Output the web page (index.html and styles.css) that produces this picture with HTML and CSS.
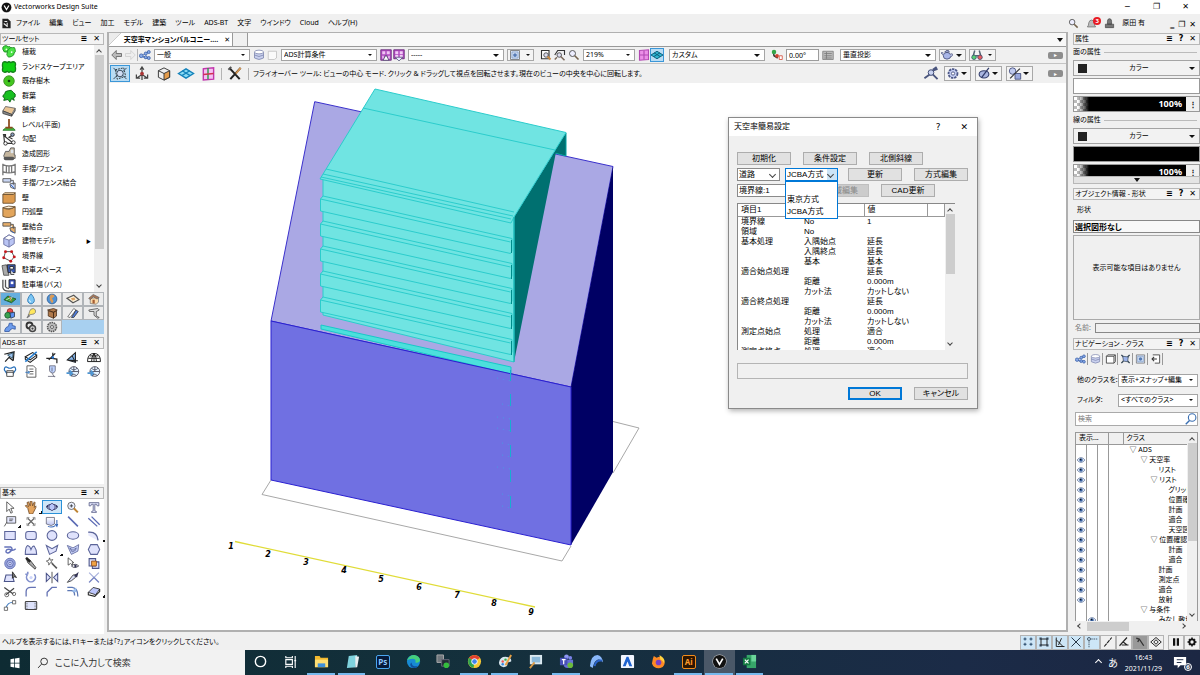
FILE: index.html
```html
<!DOCTYPE html>
<html lang="ja">
<head>
<meta charset="utf-8">
<title>Vectorworks Design Suite</title>
<link rel="stylesheet" href="styles.css">
</head>
<body>
<svg class="sprite" aria-hidden="true">
<defs>
<linearGradient id="gPurple" x1="0" y1="0" x2="0" y2="1"><stop offset="0" stop-color="#fff"/><stop offset="1" stop-color="#b9c2f2"/></linearGradient>
<!-- landscape tools -->
<symbol id="plants" viewBox="0 0 16 16"><path d="M1 5q-1-3 2-4 2-1 4 1 2-1 3 1l-1 4q-2 2-4 1-3 1-4-3z" fill="#3fdc3c" stroke="#1c8a22"/><path d="M6 9q-1-3 2-4 1-3 4-2 3-1 3 2 1 3-1 4 0 3-3 4-4 2-5-1-1-1 0-3z" fill="#4be246" stroke="#1c8a22"/><circle cx="11" cy="8" r="1" fill="#fff"/><circle cx="5" cy="5" r="1" fill="#e8ffe0"/></symbol>
<symbol id="area" viewBox="0 0 16 16"><path d="M1 3q2-2 5 0 2-2 4 0 3-2 5 0 1 2 0 4 1 3 0 6-2 2-5 0-2 2-4 0-3 2-5 0-1-2 0-4-1-3 0-6z" fill="#0fcf12" stroke="#14801a" stroke-width="1.5"/></symbol>
<symbol id="tree" viewBox="0 0 16 16"><circle cx="8" cy="8" r="6" fill="#43c61f" stroke="#3a8a26"/><circle cx="8" cy="8" r="1.500" fill="#123f10"/></symbol>
<symbol id="bush" viewBox="0 0 16 16"><path d="M1 9q0-3 2-3 0-4 4-4 4-2 6 2 3 1 2 5l-2 1 1 3-3-2-2 4-2-3-5 1 1-3z" fill="#18c020" stroke="#0a5f12"/></symbol>
<symbol id="pave" viewBox="0 0 16 16"><path d="M1 9l3-5 11 2-4 7z" fill="#e9c595" stroke="#666"/><path d="M1 9v3l10 3v-2zM11 13v2l4-6V6" fill="#8b8b8b" stroke="#444"/></symbol>
<symbol id="level" viewBox="0 0 16 16"><path d="M1 14q3-4 7-3 5-1 7 3z" fill="#49b83e" stroke="#25782a"/><path d="M8 1v10M4 11h8" stroke="#8c4a1e" stroke-width="2"/></symbol>
<symbol id="slope" viewBox="0 0 16 16"><path d="M1 3h3v3M2 4l11 9H3zM13 3l-5 3 4 2" fill="none" stroke="#333" stroke-width="1.300"/><circle cx="12" cy="3" r="2" fill="#8aa0c0" stroke="#222"/><circle cx="4" cy="13" r="2" fill="#fff" stroke="#222"/><circle cx="13" cy="12" r="2" fill="#fff" stroke="#222"/></symbol>
<symbol id="dozer" viewBox="0 0 16 16"><path d="M2 10l2-5h4l2-4h4v8h1v4H3z" fill="#c5b69e" stroke="#555"/><rect x="2" y="11" width="12" height="4" rx="2" fill="#555"/><path d="M10 3h3v4h-3z" fill="#dfe6ee"/></symbol>
<symbol id="fence" viewBox="0 0 16 16"><path d="M1 2v13M15 2v13M1 3q7 3 14 0M1 11q7 3 14 0M5 4v8M8 4v9M11 4v8" stroke="#777" stroke-width="1.500" fill="none"/></symbol>
<symbol id="fencej" viewBox="0 0 16 16"><path d="M1 3h9v4H1zM10 5h3v5M9 9l6-1v7l-5-2z" fill="#c9d6f4" stroke="#555"/><path d="M10 10l4 4" stroke="#2d63c8"/></symbol>
<symbol id="wall" viewBox="0 0 16 16"><path d="M1 4h12l2-2v10l-2 2H1z" fill="#dc9a4e" stroke="#6b5030"/><path d="M1 4l2-2h12l-2 2z" fill="#f7d7a8" stroke="#6b5030"/></symbol>
<symbol id="cwall" viewBox="0 0 16 16"><path d="M1 3q7 4 14-1v10q-7 4-14 1z" fill="#e2a55c" stroke="#6b5030"/><path d="M1 3q6-3 14-1-7 4-14 1z" fill="#fff0d8" stroke="#6b5030"/></symbol>
<symbol id="wallj" viewBox="0 0 16 16"><path d="M1 3h9v4H1zM10 5h3v5M9 9l6-1v7l-5-2z" fill="#e7ae69" stroke="#555"/><path d="M10 12l4 3" stroke="#2d63c8"/></symbol>
<symbol id="bmodel" viewBox="0 0 16 16"><path d="M2 5l6-4 6 3v7l-6 4-6-3z" fill="#b9c4f3" stroke="#6a70a0"/><path d="M2 5l6 2 6-3-6-3z" fill="#fff" stroke="#6a70a0"/><path d="M8 7v8" stroke="#6a70a0"/></symbol>
<symbol id="bound" viewBox="0 0 16 16"><path d="M4 3l7 0 3 6-4 5-8-4z" fill="none" stroke="#444"/><g fill="#c7181e"><circle cx="4" cy="3" r="1.700"/><circle cx="11" cy="3" r="1.700"/><circle cx="14" cy="9" r="1.700"/><circle cx="10" cy="14" r="1.700"/><circle cx="2" cy="10" r="1.700"/></g></symbol>
<symbol id="park" viewBox="0 0 16 16"><path d="M0 3l5-1 3 12H2z" fill="#aaa" stroke="#555"/><path d="M6 2h9v9H7z" fill="#3d5cb8" stroke="#222"/><path d="M9 4h4v3H9zM10 8v5h4" fill="#fff" stroke="#222"/></symbol>
<symbol id="bus" viewBox="0 0 16 16"><path d="M1 2v9q1 4 6 4h7M4 2v8q1 2 4 2" fill="none" stroke="#555" stroke-width="1.500"/><path d="M8 2h7v9H8z" fill="#3953b8" stroke="#222"/><path d="M10 4h3v3h-3z" fill="#fff"/></symbol>
<!-- tool set tabs -->
<symbol id="t1" viewBox="0 0 16 16"><path d="M0 9l5-5 11 4-6 5z" fill="#3b9e36" stroke="#17451d"/><path d="M3 9l6-3M8 10l3-5" stroke="#fff"/><path d="M7 4l3 7" stroke="#ea5a2b"/></symbol>
<symbol id="t2" viewBox="0 0 16 16"><path d="M8 1q6 7 4 11-4 5-8 0-2-4 4-11z" fill="#7cc6f4" stroke="#1e6aa8"/><path d="M6 9q0 3 2 3" stroke="#fff" fill="none"/></symbol>
<symbol id="t3" viewBox="0 0 16 16"><circle cx="8" cy="8" r="6.500" fill="#4f93d8" stroke="#25558f"/><path d="M7 2q5 0 4 3l-3 2 2 4-2 3-3-5V4z" fill="#d99b59"/></symbol>
<symbol id="t4" viewBox="0 0 16 16"><path d="M0 7l9-4 7 6-8 4z" fill="#fbf0d8" stroke="#555" stroke-width="1.500"/><path d="M5 7l5-1 1 3-4 1z" fill="#e0a565"/></symbol>
<symbol id="t5" viewBox="0 0 16 16"><path d="M3 7v7l8 1 3-3V6z" fill="#fbd9a8" stroke="#777"/><path d="M1 7l6-5 8 4-3 2-5-3-4 4z" fill="#a87555" stroke="#666"/><path d="M6 9h3v5H6z" fill="#a55d33"/></symbol>
<symbol id="t6" viewBox="0 0 16 16"><path d="M4 7q0-5 4-5t4 5z" fill="#e84c4c" stroke="#822"/><circle cx="5" cy="11" r="4" fill="#3aa24f" stroke="#164f2b"/><path d="M8 8l6-1v6l-5 2z" fill="#5b8ff0" stroke="#234"/></symbol>
<symbol id="t7" viewBox="0 0 16 16"><path d="M4 11q2-3 2-5 1-4 5-4 4 1 3 5-1 3-6 3z" fill="#ffe75e" stroke="#777"/><path d="M2 14l3-4 2 2-4 3z" fill="#777"/></symbol>
<symbol id="t8" viewBox="0 0 16 16"><path d="M2 4l8-2 5 2-5 3zM3 5l7 2v8l-7-3zM10 7l4-2v7l-4 3z" fill="#b07a4c" stroke="#462b17"/></symbol>
<symbol id="t9" viewBox="0 0 16 16"><path d="M1 13L9 2l3 2-8 10z" fill="#fff" stroke="#555"/><path d="M6 14l6-10 3 2-6 8z" fill="#4d7adb" stroke="#333"/></symbol>
<symbol id="t10" viewBox="0 0 16 16"><path d="M1 4l12-2 2 2-4 2v6l4 2-2 1-5-4V6L2 6z" fill="#ddd" stroke="#444"/></symbol>
<symbol id="t11" viewBox="0 0 16 16"><path d="M1 12q1-4 5-5l1-4h4v3l4 1v4l-4-1-3 2-1 2H1z" fill="#6d9cec" stroke="#294f9b"/></symbol>
<symbol id="t12" viewBox="0 0 16 16"><circle cx="6" cy="6" r="4" fill="none" stroke="#333" stroke-width="2.500"/><circle cx="10" cy="10" r="4" fill="#ddd" stroke="#444" stroke-width="2"/><circle cx="10" cy="10" r="1.500" fill="#444"/></symbol>
<symbol id="gear" viewBox="0 0 16 16"><circle cx="8" cy="8" r="6" fill="#bbb" stroke="#555" stroke-width="2" stroke-dasharray="2 1"/><circle cx="8" cy="8" r="2" fill="#eee" stroke="#444"/></symbol>
<!-- ADS-BT -->
<symbol id="a1" viewBox="0 0 16 16"><path d="M1 4l12-3-1 11M2 13L13 1M7 8l5 4" fill="none" stroke="#222" stroke-width="1.500"/><path d="M5 5l7-3-1 7z" fill="#9bc2ef" stroke="#245"/></symbol>
<symbol id="a2" viewBox="0 0 16 16"><path d="M1 7l9-5 5 3-8 6zM1 7v3l6 4 8-6V5" fill="none" stroke="#222" stroke-width="1.300"/><path d="M1 13L15 1" stroke="#267ed0" stroke-width="2"/></symbol>
<symbol id="a3" viewBox="0 0 16 16"><path d="M1 9h7l6 1v5M4 11l8-8M9 2v5" fill="none" stroke="#222" stroke-width="1.500"/><circle cx="9" cy="8" r="1.500" fill="#2476d8"/></symbol>
<symbol id="a4" viewBox="0 0 16 16"><path d="M1 11l10-9v12zM1 11l13 1M7 6l4 8" fill="#86b6ec" stroke="#222" stroke-width="1.300"/></symbol>
<symbol id="a5" viewBox="0 0 16 16"><path d="M0 13q0-10 8-10t8 10zM5 13q0-6 3-10 3 4 3 10M8 3v10M1 9h14M3 6h10" fill="none" stroke="#222" stroke-width="1.200"/></symbol>
<symbol id="a6" viewBox="0 0 16 16"><path d="M5 3Q1 1 1 6l4 6M11 3q4-2 4 3l-4 6M5 3q3 2 6 0" fill="none" stroke="#246db8" stroke-width="1.500"/><path d="M4 7h8v7H4z" fill="#fff" stroke="#333"/><path d="M4 9h8" stroke="#333"/></symbol>
<symbol id="a7" viewBox="0 0 16 16"><path d="M3 1h8l3 3v11H3z" fill="#fff" stroke="#444"/><path d="M6 5h5M6 8h5M6 11h5" stroke="#444"/><path d="M1 9h5l-2-2M6 9l-2 2" stroke="#226fc2" fill="none"/></symbol>
<symbol id="a8" viewBox="0 0 16 16"><path d="M5 1h7v6q-1 3-3 3-4-1-4-3z" fill="#bed3ff" stroke="#667"/><path d="M3 14h9M8 10l3 5M8 3v5" stroke="#667"/></symbol>
<symbol id="a9" viewBox="0 0 16 16"><circle cx="9" cy="8" r="6" fill="#e4f2ff" stroke="#445"/><path d="M3 8h12M9 2v6M5 4q4 4 8 0M6 14q1-5 6-1" stroke="#445" fill="none"/><path d="M0 10h7M4 7l3 3-3 3" stroke="#4e95d2" stroke-width="2" fill="none"/></symbol>
<!-- basic tools -->
<symbol id="cursor" viewBox="0 0 16 16"><path d="M4 1v12l3-3 2 5 2-1-2-5h4z" fill="#fff" stroke="#444"/></symbol>
<symbol id="hand" viewBox="0 0 16 16"><path d="M4 9L1 6l1-1 3 2-2-5 2-1 2 5V0h2l1 6 2-5 1 1-1 6 2-2v2l-3 6-1 2H6z" fill="#e5a55e" stroke="#704a26"/></symbol>
<symbol id="orbit" viewBox="0 0 16 16"><ellipse cx="8" cy="8" rx="7" ry="3.500" fill="none" stroke="#336" stroke-width="1.300"/><path d="M8 3l4 3v4l-4 3-4-3V6z" fill="#b9c6f8" stroke="#336"/><path d="M0 7l3-2v4zM16 7l-3-2v4z" fill="#336"/></symbol>
<symbol id="zoomin" viewBox="0 0 16 16"><circle cx="6" cy="6" r="4.500" fill="#e9efff" stroke="#555"/><path d="M4 6h4M6 4v4" stroke="#333"/><path d="M9 9l5 5" stroke="#be8433" stroke-width="2.500"/></symbol>
<symbol id="text" viewBox="0 0 16 16"><path d="M2 2h12v4h-2l-1-2H9v8l2 1v1H5v-1l2-1V4H5L4 6H2z" fill="#dfe3fa" stroke="#5b6087"/></symbol>
<symbol id="note" viewBox="0 0 16 16"><path d="M4 2h11v8H4zM4 9l-3 5" fill="#e6e9ff" stroke="#444"/><path d="M7 5h5M7 7h4" stroke="#444"/></symbol>
<symbol id="locus" viewBox="0 0 16 16"><path d="M4 4l8 8M12 4l-8 8" stroke="#666" stroke-width="1.500"/><path d="M3 6V3h3M10 3h3v3M3 10v3h3M10 13h3v-3" fill="none" stroke="#888"/></symbol>
<symbol id="push" viewBox="0 0 16 16"><path d="M1 3h10v8l-4 2-6-2z" fill="url(#gPurple)" stroke="#667"/><path d="M3 14q5 2 9-1M14 6v7M12 11l2 3 1-3" stroke="#3566b8" fill="none" stroke-width="1.300"/></symbol>
<symbol id="line" viewBox="0 0 16 16"><path d="M2 2l12 12" stroke="#5b6ab4" stroke-width="2"/></symbol>
<symbol id="dline" viewBox="0 0 16 16"><path d="M1 4l11 10M5 2l10 10" stroke="#5b6ab4" stroke-width="1.600"/></symbol>
<symbol id="rect" viewBox="0 0 16 16"><path d="M1.500 3h13v10h-13z" fill="#dfe2fc" stroke="#5b6499" stroke-width="1.300"/></symbol>
<symbol id="rrect" viewBox="0 0 16 16"><rect x="1.500" y="3" width="13" height="10" rx="3" fill="#dfe2fc" stroke="#5b6499" stroke-width="1.300"/></symbol>
<symbol id="circ" viewBox="0 0 16 16"><circle cx="8" cy="8" r="6" fill="#dfe2fc" stroke="#5b6499" stroke-width="1.300"/></symbol>
<symbol id="oval" viewBox="0 0 16 16"><ellipse cx="8" cy="8" rx="7" ry="4.500" fill="#dfe2fc" stroke="#5b6499" stroke-width="1.300"/></symbol>
<symbol id="arc" viewBox="0 0 16 16"><path d="M1 4q11-1 12 10L1 8" fill="#e8eafd"/><path d="M1 4q11-1 12 10" fill="none" stroke="#5b6499" stroke-width="1.600"/></symbol>
<symbol id="free" viewBox="0 0 16 16"><path d="M1 5h8q3 2 0 5-4 4-6 1 0-4 5-3 4 2 7-1" fill="none" stroke="#6573ba" stroke-width="1.800"/></symbol>
<symbol id="spline" viewBox="0 0 16 16"><path d="M1 14q0-10 3-11 3 1 4 5 2-5 4-4 3 4 3 10z" fill="#dfe2fc" stroke="#5b6499" stroke-width="1.300"/></symbol>
<symbol id="poly" viewBox="0 0 16 16"><path d="M1 3l7 4 7-4-2 7-8 4z" fill="#dfe2fc" stroke="#5b6499" stroke-width="1.300"/></symbol>
<symbol id="dpoly" viewBox="0 0 16 16"><path d="M1 3l7 3 7-4-1 8-8 4zM4 6l4 3 4-3-1 3-4 2z" fill="#c7d1f9" stroke="#5b6499"/></symbol>
<symbol id="hex" viewBox="0 0 16 16"><path d="M4 2h8l3 6-3 6H4L1 8z" fill="#dfe2fc" stroke="#5b6499" stroke-width="1.300"/></symbol>
<symbol id="spiral" viewBox="0 0 16 16"><circle cx="8" cy="8" r="6.500" fill="#9aa5dd" stroke="#5b6ab0"/><circle cx="8" cy="8" r="4" fill="#b3bdec" stroke="#5b67ad"/><circle cx="8" cy="8" r="1.500" fill="#eef" stroke="#5b67ad"/></symbol>
<symbol id="dropper" viewBox="0 0 16 16"><path d="M2 1l5 3 7 9-1 2-9-8z" fill="#aaa" stroke="#333"/><path d="M2 1l5 5" stroke="#222" stroke-width="3"/></symbol>
<symbol id="wand" viewBox="0 0 16 16"><path d="M5 1l1 3 3-1-2 3 2 2-3-1-2 3V7L1 5l3-1z" fill="#fff" stroke="#555"/><path d="M8 8l6 6" stroke="#555" stroke-width="2"/></symbol>
<symbol id="seye" viewBox="0 0 16 16"><path d="M2 1v9l3-2 3 3-1-4h2z" fill="#fff" stroke="#444"/><path d="M6 11q5-4 9 0-5 4-9 0z" fill="#fff" stroke="#334"/><circle cx="11" cy="11" r="1.500" fill="#335"/></symbol>
<symbol id="clip" viewBox="0 0 16 16"><path d="M2 2h8v9H2zM6 6h8v8H6z" fill="#dfe2fc" stroke="#4b5489" stroke-width="1.300"/><path d="M5 5h6v6H5z" fill="#f1a344" stroke="#904d1e"/></symbol>
<symbol id="reshape" viewBox="0 0 16 16"><path d="M3 5l8 0 2 8H1z" fill="#dfe2fc" stroke="#4b5489" stroke-width="1.300"/><path d="M11 1v8l2-2 3 1z" fill="#777" stroke="#222"/></symbol>
<symbol id="rot" viewBox="0 0 16 16"><path d="M4 4a5.500 5.500 0 1 0 8 0M4 4V1M4 4H1" fill="none" stroke="#8290cd" stroke-width="2"/><circle cx="8" cy="8" r="2" fill="#cfd6fa"/></symbol>
<symbol id="mirror" viewBox="0 0 16 16"><path d="M1 3l5 5-5 5zM15 3l-5 5 5 5z" fill="#dfe2fc" stroke="#4b5489" stroke-width="1.300"/><path d="M8 1v14" stroke="#333"/></symbol>
<symbol id="knife" viewBox="0 0 16 16"><path d="M1 14L8 5l5-1-2 4-5 4z" fill="#d9ddf6" stroke="#333"/><path d="M9 6l6-5-2 7z" fill="#335"/></symbol>
<symbol id="trim" viewBox="0 0 16 16"><path d="M2 2l12 12M14 2L2 14" stroke="#aab2dc" stroke-width="1.600"/><path d="M2 14l6-6 6 6" fill="none" stroke="#7d89c4" stroke-width="1.600"/></symbol>
<symbol id="sciss" viewBox="0 0 16 16"><path d="M1 3l11 8M3 12L13 4" stroke="#444" stroke-width="1.500"/><circle cx="4" cy="12" r="2.500" fill="none" stroke="#555"/><circle cx="13" cy="11" r="2" fill="none" stroke="#555"/></symbol>
<symbol id="fillet" viewBox="0 0 16 16"><path d="M2 14V8q0-5 6-5h6" fill="none" stroke="#6573b4" stroke-width="1.600"/></symbol>
<symbol id="chamf" viewBox="0 0 16 16"><path d="M2 14V9l6-6h6" fill="none" stroke="#6573b4" stroke-width="1.600"/></symbol>
<symbol id="offs" viewBox="0 0 16 16"><path d="M1 3h6q7 1 7 11M1 7h5q4 0 4 6" fill="none" stroke="#5c77b4" stroke-width="1.600"/><path d="M6 8l6-5v6z" fill="#9ec1ee"/></symbol>
<symbol id="plane" viewBox="0 0 16 16"><path d="M1 9l6-6 8 2-5 7z" fill="#bcc5fb" stroke="#222"/><path d="M1 9v3l8 2 6-6V5" fill="none" stroke="#222" stroke-width="1.300"/></symbol>
<symbol id="conn" viewBox="0 0 16 16"><path d="M3 11q2-7 9-7" fill="none" stroke="#4c84c4" stroke-width="1.500"/><path d="M1 10h4v4H1zM11 2h4v4h-4z" fill="#fff" stroke="#555"/></symbol>
<symbol id="frame" viewBox="0 0 16 16"><rect x="1" y="3" width="14" height="10" rx="1" fill="#dde2fb" stroke="#444" stroke-width="1.300"/><path d="M3 3v10M13 3v10" stroke="#444" stroke-dasharray="1 1"/></symbol>
<!-- tool bars -->
<symbol id="doc" viewBox="0 0 16 16"><path d="M2 1h8l4 4v10H2z" fill="#222"/><path d="M5 5h4M4 8l5 4M9 7v6" stroke="#eee" stroke-width="1.500"/></symbol>
<symbol id="vlogo" viewBox="0 0 16 16"><circle cx="8" cy="8" r="7.500" fill="#ccc"/><circle cx="8" cy="8" r="7" fill="#111"/><path d="M4.500 5L8 11l3.500-6" fill="none" stroke="#fff" stroke-width="1.800"/></symbol>
<symbol id="back" viewBox="0 0 16 16"><path d="M1 8l6-6v4h7v4H7v4z" fill="#bbb" stroke="#555"/></symbol>
<symbol id="fwd" viewBox="0 0 16 16"><path d="M15 8L9 2v4H2v4h7v4z" fill="#eee" stroke="#ccc"/></symbol>
<symbol id="class" viewBox="0 0 16 16"><path d="M3 9l10-5M3 9l10 3M3 9l6 4" stroke="#456bb0"/><g fill="#88a9e8" stroke="#3159a3"><circle cx="3" cy="9" r="2.500"/><circle cx="9" cy="6" r="2"/><circle cx="13" cy="4" r="2"/><circle cx="9" cy="11" r="2"/><circle cx="13" cy="12" r="2"/></g></symbol>
<symbol id="layer" viewBox="0 0 16 16"><path d="M2 4v8q6 4 12 0V4" fill="#c9d0ee" stroke="#7780aa"/><path d="M2 8q6 4 12 0" fill="none" stroke="#7780aa"/><ellipse cx="8" cy="4" rx="6" ry="2.500" fill="#fff" stroke="#7780aa"/></symbol>
<symbol id="sheet" viewBox="0 0 16 16"><path d="M3 3h11v9l-3 2H3z" fill="#fafafa" stroke="#bbb"/></symbol>
<symbol id="pview" viewBox="0 0 16 16"><path d="M1 1h14v14H1z" fill="#b04cc0" stroke="#5a1b6e"/><path d="M3 3h4v4H3zM9 3h4v4H9zM3 9h2v4H3zM11 9h2v4h-2z" fill="#f0c3f5"/><path d="M4 15l4-7 4 7z" fill="#fff" stroke="#446"/></symbol>
<symbol id="pview2" viewBox="0 0 16 16"><path d="M1 1h14v12H1z" fill="#b04cc0" stroke="#5a1b6e"/><path d="M3 3h4v4H3zM9 3h4v4H9zM3 8h4v3H3zM9 8h4v3H9z" fill="#f3cdf7"/><path d="M3 11h10l-5 5z" fill="#e9ecff" stroke="#557"/></symbol>
<symbol id="vsave" viewBox="0 0 16 16"><path d="M2 2h12v12H2z" fill="#dce6f7" stroke="#666"/><path d="M4 4h8v8H4z" fill="none" stroke="#7496c5"/><circle cx="8" cy="8" r="2.500" fill="#567bb5"/></symbol>
<symbol id="zpage" viewBox="0 0 16 16"><path d="M2 2h10v11H2z" fill="#fff" stroke="#333" stroke-width="1.500"/><circle cx="8" cy="8" r="3" fill="#dde" stroke="#333"/><path d="M10 10l4 4" stroke="#c78a45" stroke-width="2.500"/></symbol>
<symbol id="zobj" viewBox="0 0 16 16"><path d="M1 8l4-6h9v6" fill="none" stroke="#333" stroke-width="1.500"/><circle cx="7" cy="8" r="3" fill="#dde" stroke="#333"/><path d="M9 10l5 5M1 14l3-3" stroke="#7d6a5b" stroke-width="2"/></symbol>
<symbol id="mag" viewBox="0 0 16 16"><circle cx="6" cy="6" r="4" fill="#eef" stroke="#555" stroke-width="1.300"/><path d="M9 9l5 5" stroke="#73624d" stroke-width="2.200"/></symbol>
<symbol id="pgrid" viewBox="0 0 16 16"><path d="M2 2l12-1v13l-12 1z" fill="#ec8fe8" stroke="#b24ab3" stroke-width="1.500"/><path d="M8 2v12M2 8h12" stroke="#b24ab3" stroke-width="1.500"/></symbol>
<symbol id="tgrid" viewBox="0 0 16 16"><path d="M0 8l8-5 8 5-8 5z" fill="#2fb4cf" stroke="#0c5f7c" stroke-width="1.300"/><path d="M4 5l8 5M12 5l-8 5" stroke="#0c5f7c" stroke-width="1.300"/></symbol>
<symbol id="angle" viewBox="0 0 16 16"><path d="M3 3l1 6 5 3" fill="none" stroke="#333" stroke-width="2"/><circle cx="4" cy="4" r="3" fill="#34a546"/><circle cx="8" cy="9" r="2.500" fill="#d3402d"/><path d="M11 9h4v5h-4z" fill="#fff" stroke="#d3402d"/></symbol>
<symbol id="mlist" viewBox="0 0 16 16"><path d="M1 3h14v11H1z" fill="#bbb" stroke="#777"/><path d="M3 6h10M3 9h10M3 12h10M6 4v9" stroke="#777"/></symbol>
<symbol id="teapot" viewBox="0 0 16 16"><ellipse cx="8" cy="9" rx="5" ry="4.500" fill="#a9b6e8" stroke="#39416e"/><path d="M3 8L0 5l3 0M13 7q3-2 2 2l-3 2M5 4h6l-1-2H7z" fill="#cfd8fa" stroke="#39416e"/></symbol>
<symbol id="glass" viewBox="0 0 16 16"><path d="M3 9l2-7M13 9l-2-7M6 9h4" stroke="#567" stroke-width="2"/><circle cx="4" cy="11" r="3" fill="#56d477" stroke="#346"/><circle cx="12" cy="11" r="3" fill="#ee5c60" stroke="#346"/></symbol>
<symbol id="fly" viewBox="0 0 16 16"><path d="M3 4l9-2 2 9-9 3z" fill="none" stroke="#333" stroke-dasharray="2 1"/><circle cx="8" cy="8" r="3.500" fill="#cfdcf3" stroke="#345"/><path d="M1 2l4 4M15 2l-4 4M1 14l4-4M15 14l-4-4" stroke="#345"/></symbol>
<symbol id="axes" viewBox="0 0 16 16"><path d="M8 9V1M8 9l-6 4M8 9l6 4M6 4l2-3 2 3M2 9v4h4M14 9v4h-4M8 9v6" fill="none" stroke="#444" stroke-width="1.300"/><circle cx="8" cy="8" r="2" fill="#a33"/></symbol>
<symbol id="cube" viewBox="0 0 16 16"><path d="M2 5l6-3 6 3v7l-6 3-6-3z" fill="#eee" stroke="#333"/><path d="M8 8l6-3v7l-6 3z" fill="#e39b4b" stroke="#333"/><path d="M2 5l6 3" stroke="#333"/></symbol>
<symbol id="bgrid" viewBox="0 0 16 16"><path d="M0 8l8-5 8 5-8 5z" fill="#8bdcf6" stroke="#1482ba" stroke-width="1.500"/><path d="M4 5l8 5M12 5l-8 5" stroke="#1482ba" stroke-width="1.300"/></symbol>
<symbol id="rgrid" viewBox="0 0 16 16"><path d="M3 3l11-1v12l-11 1z" fill="#f6c0f3" stroke="#c236ad" stroke-width="1.500"/><path d="M8 2v12" stroke="#2b9a48" stroke-width="1.500"/><path d="M3 9l11-1" stroke="#d0314f" stroke-width="1.500"/></symbol>
<symbol id="wrench" viewBox="0 0 16 16"><path d="M2 2l11 12M3 14L14 2" stroke="#222" stroke-width="2.200"/><path d="M9 8l5-6" stroke="#d89a55" stroke-width="2"/><path d="M1 4l3-3" stroke="#555" stroke-width="2"/></symbol>
<symbol id="cross" viewBox="0 0 16 16"><path d="M1 13L8 8M7 6L15 3M8 7l7 7M10 4l4-3" stroke="#4a557e" stroke-width="2"/><circle cx="8" cy="7" r="3" fill="#c9d3f2" stroke="#3a456e"/></symbol>
<symbol id="pgear" viewBox="0 0 16 16"><circle cx="8" cy="8" r="5.500" fill="#c4cdf1" stroke="#4d5888" stroke-width="2.200" stroke-dasharray="3 1"/><circle cx="8" cy="8" r="2" fill="#fff" stroke="#3d4878"/></symbol>
<symbol id="orb" viewBox="0 0 16 16"><ellipse cx="8" cy="9" rx="6" ry="4.500" fill="#a9b6e0" stroke="#303b69" stroke-width="1.300"/><path d="M5 13L14 1" stroke="#303b69" stroke-width="1.500"/></symbol>
<symbol id="shp" viewBox="0 0 16 16"><circle cx="5" cy="5" r="4" fill="#c0caee" stroke="#3d4878"/><path d="M8 8h7v7H8z" fill="#9aa8dc" stroke="#3d4878"/><path d="M2 14L14 2" stroke="#333" stroke-width="1.500"/></symbol>
<symbol id="bell" viewBox="0 0 16 16"><path d="M2 13q2-2 2-6 1-4 4-4t4 4q0 4 2 6z" fill="#bbb" stroke="#666"/></symbol>
<symbol id="user" viewBox="0 0 16 16"><path d="M2 14V9h12v5zM5 9V5q0-4 3-4t3 4v4z" fill="#777" stroke="#444"/></symbol>
<symbol id="eye" viewBox="0 0 16 16"><path d="M0 8q8-10 16 0-8 10-16 0z" fill="#e4ecf8" stroke="#54698f" stroke-width="1.300"/><circle cx="8" cy="8" r="3.500" fill="#365f9f"/><circle cx="7" cy="7" r="1.500" fill="#111"/></symbol>
<symbol id="bsearch" viewBox="0 0 16 16"><circle cx="9.500" cy="6" r="5" fill="none" stroke="#3a6fb2" stroke-width="1.500"/><path d="M6 10l-5 5" stroke="#3a6fb2" stroke-width="1.800"/></symbol>
<symbol id="n3" viewBox="0 0 16 16"><path d="M2 4l2-2h11v10l-2 2H2zM2 4h11v10M13 4l2-2" fill="#fff" stroke="#444" stroke-width="1.300"/></symbol>
<symbol id="n4" viewBox="0 0 16 16"><path d="M2 2l3 3M14 2l-3 3M2 14l3-3M14 14l-3-3" stroke="#345" stroke-width="2"/><path d="M4 4l8 1-1 7-6-1z" fill="#9cb3ea" stroke="#345"/></symbol>
<symbol id="n6" viewBox="0 0 16 16"><path d="M4 2h10v12H7" fill="#fff" stroke="#444" stroke-width="1.300"/><path d="M10 8H3M6 5L3 8l3 3" fill="none" stroke="#333" stroke-width="1.500"/></symbol>
<!-- snapping -->
<symbol id="s1" viewBox="0 0 16 16"><path d="M2 4h4M4 2v4M10 4h4M12 2v4M2 11h4M4 9v4M10 11h4M12 9v4" stroke="#246" stroke-width="1.300"/></symbol>
<symbol id="s2" viewBox="0 0 16 16"><path d="M4 4h8v8H4z" fill="none" stroke="#222" stroke-width="1.300"/><path d="M2 2h3v3H2zM11 2h3v3h-3zM2 11h3v3H2zM11 11h3v3h-3z" fill="#345"/></symbol>
<symbol id="s3" viewBox="0 0 16 16"><path d="M3 2v12h11M3 5l9 9M10 3l-4 9" fill="none" stroke="#222" stroke-width="1.300"/></symbol>
<symbol id="s4" viewBox="0 0 16 16"><path d="M2 2l12 12M14 2L2 14" stroke="#234" stroke-width="1.300"/></symbol>
<symbol id="s5" viewBox="0 0 16 16"><circle cx="4" cy="4" r="2" fill="none" stroke="#234"/><path d="M7 4h8M4 7v8" stroke="#234" stroke-dasharray="2 1"/></symbol>
<symbol id="s6" viewBox="0 0 16 16"><path d="M3 14L13 2" stroke="#222" stroke-width="1.500" stroke-dasharray="5 1"/></symbol>
<symbol id="s7" viewBox="0 0 16 16"><path d="M2 13L12 2M5 12h9M7 8l5 4" stroke="#222" stroke-width="1.500" fill="none"/></symbol>
<symbol id="s8" viewBox="0 0 16 16"><path d="M3 3l4 1 6 9M7 4l-2 4" stroke="#333" stroke-width="1.800" fill="none"/></symbol>
<symbol id="s9" viewBox="0 0 16 16"><path d="M1 8l7-6 7 6-7 6zM5 8l3-3 3 3-3 3z" fill="none" stroke="#222" stroke-width="1.300"/></symbol>
<symbol id="pause" viewBox="0 0 16 16"><path d="M4 3h3v10H4zM9 3h3v10H9z" fill="#111"/></symbol>
<symbol id="cog" viewBox="0 0 16 16"><circle cx="8" cy="8" r="3.500" fill="none" stroke="#111" stroke-width="2.500"/><path d="M8 2v2M8 12v2M2 8h2M12 8h2M4 4l1 1M11 11l1 1M12 4l-1 1M5 11l-1 1" stroke="#111" stroke-width="2"/></symbol>
<!-- task bar -->
<symbol id="win" viewBox="0 0 16 16"><path d="M2 3l5-1v5.500H2zM8 2l6-1v6.500H8zM2 8.500h5V14l-5-1zM8 8.500h6V15l-6-1z" fill="#fff"/></symbol>
<symbol id="wsearch" viewBox="0 0 16 16"><circle cx="9.500" cy="6" r="4.500" fill="none" stroke="#333" stroke-width="1.300"/><path d="M6 9.500L1.500 14.500" stroke="#333" stroke-width="1.300"/></symbol>
<symbol id="cort" viewBox="0 0 16 16"><circle cx="8" cy="8" r="5.500" fill="none" stroke="#fff" stroke-width="1.500"/></symbol>
<symbol id="tview" viewBox="0 0 16 16"><path d="M3 6h7v5H3zM3 2v2h7V2M3 15v-2h7v2M13 2v13M12 7h2" fill="none" stroke="#fff" stroke-width="1.200"/></symbol>
<symbol id="folder" viewBox="0 0 16 16"><path d="M1 2h5l1 2h8v10H1z" fill="#f2b92f"/><path d="M1 6h14v8H1z" fill="#ffdf73"/><path d="M4 10h8v4H4z" fill="#3f91dc"/></symbol>
<symbol id="npad" viewBox="0 0 16 16"><path d="M4 2l9-1-2 13-9 1z" fill="#7fd3de"/><path d="M11 2l4 1-2 11-9 1 7-1z" fill="#e8edf0"/></symbol>
<symbol id="edge" viewBox="0 0 16 16"><circle cx="8" cy="8" r="7" fill="#178ad4"/><path d="M1 7q2-6 8-6 6 1 6 6-1 3-5 2 1-4-3-4-4 0-6 2z" fill="#45cf7c"/><path d="M6 9q0 5 7 4-3 3-7 1-3-3 0-5z" fill="#0f4f9e"/></symbol>
<symbol id="rpc" viewBox="0 0 16 16"><path d="M1 1h7v8H1z" fill="#71787e" stroke="#aaa"/><path d="M6 6h8v7H6z" fill="#222d35" stroke="#667"/><circle cx="11" cy="12" r="3" fill="#35bd3e"/></symbol>
<symbol id="chrome" viewBox="0 0 16 16"><circle cx="8" cy="8" r="7" fill="#f7c934"/><path d="M8 8L2 4q6-6 12 0z" fill="#e2402f"/><path d="M8 8l-1 7Q-1 12 2 4z" fill="#2ea44f"/><circle cx="8" cy="8" r="3" fill="#3f83ee" stroke="#fff"/></symbol>
<symbol id="paint" viewBox="0 0 16 16"><path d="M1 9q1-6 7-6 7 1 6 5-2 1-4 1 1 5-4 5-5-1-5-5z" fill="#d8e6ee"/><circle cx="5" cy="8" r="1.300" fill="#e55"/><circle cx="8" cy="6" r="1.300" fill="#37b24d"/><circle cx="5" cy="11" r="1.300" fill="#38d"/><path d="M8 12l6-11" stroke="#eaa043" stroke-width="2"/></symbol>
<symbol id="preview" viewBox="0 0 16 16"><path d="M2 1h13v10H2z" fill="#dce9f0"/><path d="M4 3h9v6H4z" fill="#8bb9da"/><path d="M7 9l-5 6" stroke="#d69845" stroke-width="2"/></symbol>
<symbol id="teams" viewBox="0 0 16 16"><circle cx="12" cy="4" r="2" fill="#7b83eb"/><circle cx="8" cy="3" r="2.500" fill="#8f96f2"/><path d="M5 6h10v5q-2 4-6 4t-4-4z" fill="#6770d6"/><path d="M1 4h8v8H1z" fill="#4850b8"/><path d="M3 6h4M5 6v5" stroke="#fff" stroke-width="1.300"/><circle cx="12" cy="12" r="3" fill="#6cbb3c"/></symbol>
<symbol id="swirl" viewBox="0 0 16 16"><path d="M1 13Q2 1 9 1q5 1 6 8-2-4-6-3-4 2-5 9z" fill="#8ab8fa"/><path d="M6 13q1-7 8-6" stroke="#2a62c9" fill="none" stroke-width="2"/></symbol>
<symbol id="bluea" viewBox="0 0 16 16"><rect x="1" y="1" width="14" height="14" rx="1" fill="#f2f6ff"/><path d="M3 13l4-10h2l4 10h-3l-2-5-2 5z" fill="#1e63d0"/></symbol>
<symbol id="ffox" viewBox="0 0 16 16"><path d="M2 5l1-3 3 2q5-3 8 2 2 7-4 9-7 1-9-5z" fill="#ff8a24"/><path d="M9 1q7 4 5 9-2-4-4-4z" fill="#ffd340"/><circle cx="8" cy="9" r="3" fill="#7a40c6"/></symbol>
<symbol id="excel" viewBox="0 0 16 16"><path d="M5 1h10v14H5z" fill="#37a66a"/><path d="M10 1h5v7h-5z" fill="#6bd59a"/><path d="M1 4h8v8H1z" fill="#137a41"/><path d="M3 6l4 4M7 6l-4 4" stroke="#fff" stroke-width="1.300"/></symbol>
<symbol id="notif" viewBox="0 0 16 16"><path d="M1 2h13v9H8l-3 3v-3H1z" fill="#fff"/><path d="M4 5h7M4 8h5" stroke="#1c2a44"/></symbol>
</defs>
</svg>

<div class="app">
  <header class="titlebar">
    <svg class="ic"><use href="#vlogo"/></svg><span>Vectorworks Design Suite</span>
    <div class="wincontrols"><button aria-label="最小化">─</button><button aria-label="元に戻す">❐</button><button aria-label="閉じる">✕</button></div>
  </header>
  <nav class="menubar">
    <svg class="ic"><use href="#doc"/></svg>
    <button>ファイル</button><button>編集</button><button>ビュー</button><button>加工</button><button>モデル</button><button>建築</button><button>ツール</button><button>ADS-BT</button><button>文字</button><button>ウインドウ</button><button>Cloud</button><button>ヘルプ(H)</button>
    <div class="account"><svg class="ic"><use href="#mag"/></svg><span class="alert"><svg class="ic"><use href="#bell"/></svg><b>3</b></span><svg class="ic"><use href="#user"/></svg><span>原田 有</span><span class="mdi"><i>‗</i><i>❐</i><i>✕</i></span></div>
  </nav>

  <div class="main">
    <aside class="left">
      <section class="pane toolset">
        <h2 class="ph"><span>ツールセット</span><i>≡</i><i>✕</i></h2>
        <div class="listwrap">
          <ul class="tools">
            <li><svg class="ti"><use href="#plants"/></svg>植栽</li>
            <li><svg class="ti"><use href="#area"/></svg>ランドスケープエリア</li>
            <li><svg class="ti"><use href="#tree"/></svg>既存樹木</li>
            <li><svg class="ti"><use href="#bush"/></svg>群葉</li>
            <li><svg class="ti"><use href="#pave"/></svg>舗床</li>
            <li><svg class="ti"><use href="#level"/></svg>レベル(平面)</li>
            <li><svg class="ti"><use href="#slope"/></svg>勾配</li>
            <li><svg class="ti"><use href="#dozer"/></svg>造成図形</li>
            <li><svg class="ti"><use href="#fence"/></svg>手摺/フェンス</li>
            <li><svg class="ti"><use href="#fencej"/></svg>手摺/フェンス結合</li>
            <li><svg class="ti"><use href="#wall"/></svg>壁</li>
            <li><svg class="ti"><use href="#cwall"/></svg>円弧壁</li>
            <li><svg class="ti"><use href="#wallj"/></svg>壁結合</li>
            <li><svg class="ti"><use href="#bmodel"/></svg>建物モデル<span class="sub">▶</span></li>
            <li><svg class="ti"><use href="#bound"/></svg>境界線</li>
            <li><svg class="ti"><use href="#park"/></svg>駐車スペース</li>
            <li><svg class="ti"><use href="#bus"/></svg>駐車場（バス）</li>
          </ul>
          <div class="vscroll"><i class="up"></i><b class="thumb long"></b><i class="down"></i></div>
        </div>
        <div class="tabs5">
          <button class="on" aria-label="敷地"><svg><use href="#t1"/></svg></button><button aria-label="水"><svg><use href="#t2"/></svg></button><button aria-label="地球"><svg><use href="#t3"/></svg></button><button aria-label="空間"><svg><use href="#t4"/></svg></button><button aria-label="建物"><svg><use href="#t5"/></svg></button>
          <button aria-label="3D"><svg><use href="#t6"/></svg></button><button aria-label="照明"><svg><use href="#t7"/></svg></button><button aria-label="家具"><svg><use href="#t8"/></svg></button><button aria-label="注釈"><svg><use href="#t9"/></svg></button><button aria-label="鋼材"><svg><use href="#t10"/></svg></button>
          <button aria-label="配管"><svg><use href="#t11"/></svg></button><button aria-label="ナット"><svg><use href="#t12"/></svg></button><button aria-label="機械"><svg><use href="#gear"/></svg></button>
        </div>
      </section>
      <section class="pane adsbt">
        <h2 class="ph"><span>ADS-BT</span><i>≡</i><i>✕</i></h2>
        <div class="grid5">
          <svg><use href="#a1"/></svg><svg><use href="#a2"/></svg><svg><use href="#a3"/></svg><svg><use href="#a4"/></svg><svg><use href="#a5"/></svg>
          <svg><use href="#a6"/></svg><svg><use href="#a7"/></svg><svg><use href="#a8"/></svg><svg><use href="#a9"/></svg><svg><use href="#a9"/></svg>
        </div>
      </section>
      <section class="pane basic">
        <h2 class="ph"><span>基本</span><i>≡</i><i>✕</i></h2>
        <div class="grid5">
          <svg><use href="#cursor"/></svg><span class="more"><svg><use href="#hand"/></svg></span><svg class="sel"><use href="#orbit"/></svg><svg><use href="#zoomin"/></svg><svg><use href="#text"/></svg>
          <span class="more"><svg><use href="#note"/></svg></span><svg><use href="#locus"/></svg><svg><use href="#push"/></svg><svg><use href="#line"/></svg><svg><use href="#dline"/></svg>
          <svg><use href="#rect"/></svg><svg><use href="#rrect"/></svg><svg><use href="#circ"/></svg><svg><use href="#oval"/></svg><span class="more"><svg><use href="#arc"/></svg></span>
          <svg><use href="#free"/></svg><svg><use href="#spline"/></svg><span class="more"><svg><use href="#poly"/></svg></span><svg><use href="#dpoly"/></svg><svg><use href="#hex"/></svg>
          <svg><use href="#spiral"/></svg><svg><use href="#dropper"/></svg><svg><use href="#wand"/></svg><svg><use href="#seye"/></svg><svg><use href="#clip"/></svg>
          <svg><use href="#reshape"/></svg><svg><use href="#rot"/></svg><svg><use href="#mirror"/></svg><svg><use href="#knife"/></svg><svg><use href="#trim"/></svg>
          <svg><use href="#sciss"/></svg><svg><use href="#fillet"/></svg><svg><use href="#chamf"/></svg><svg><use href="#offs"/></svg><span class="more"><svg><use href="#plane"/></svg></span>
          <svg><use href="#conn"/></svg><svg><use href="#frame"/></svg>
        </div>
      </section>
    </aside>

    <main class="center">
      <div class="doctabs"><div class="tab"><span>天空率マンションバルコニー....</span><button aria-label="タブを閉じる">✕</button></div><div class="newtab"></div><i class="tri"></i></div>
      <div class="toolbar">
        <div class="grp"><svg class="ic"><use href="#back"/></svg><svg class="ic"><use href="#fwd"/></svg><i class="sep"></i><svg class="ic"><use href="#class"/></svg></div>
        <div class="combo dot"><select aria-label="クラス"><option>一般</option></select></div>
        <div class="grp"><svg class="ic"><use href="#layer"/></svg><svg class="ic"><use href="#sheet"/></svg></div>
        <div class="combo dot"><select aria-label="レイヤ"><option>ADS計算条件</option></select></div>
        <div class="grp"><svg class="ic"><use href="#pview"/></svg><svg class="ic"><use href="#pview2"/></svg></div>
        <div class="combo"><select aria-label="ビュー"><option>-----</option></select></div>
        <button class="dd dot" aria-label="ビューを保存"><svg class="ic"><use href="#vsave"/></svg></button>
        <div class="grp sp"><svg class="ic"><use href="#zpage"/></svg><svg class="ic"><use href="#zobj"/></svg><svg class="ic"><use href="#mag"/></svg></div>
        <div class="combo dot narrow"><select aria-label="倍率"><option>219%</option></select></div>
        <div class="grp"><svg class="ic"><use href="#pgrid"/></svg><svg class="ic hot"><use href="#tgrid"/></svg></div>
        <div class="combo sp"><select aria-label="表示"><option>カスタム</option></select></div>
        <svg class="ic sp"><use href="#angle"/></svg>
        <input class="ang" aria-label="角度" value="0.00°">
        <svg class="ic"><use href="#mlist"/></svg>
        <div class="combo sp"><select aria-label="投影"><option>垂直投影</option></select></div>
        <button class="dd" aria-label="レンダリング"><svg class="ic"><use href="#teapot"/></svg></button>
        <button class="dd dot" aria-label="立体視"><svg class="ic"><use href="#glass"/></svg></button>
        <button class="pill" aria-label="展開">▸</button>
      </div>
      <div class="modebar">
        <svg class="hot"><use href="#fly"/></svg><svg><use href="#axes"/></svg><svg><use href="#cube"/></svg><svg><use href="#bgrid"/></svg><svg><use href="#rgrid"/></svg><i class="sep"></i><svg><use href="#wrench"/></svg><i class="sep"></i>
        <p>フライオーバー ツール: ビューの中心 モード. クリック &amp; ドラッグして視点を回転させます。現在のビューの中央を中心に回転します。</p>
        <div class="moderight"><svg><use href="#cross"/></svg><button class="dd" aria-label="スナップ"><svg><use href="#pgear"/></svg></button><button class="dd" aria-label="軌道"><svg><use href="#orb"/></svg></button><button class="dd" aria-label="図形"><svg><use href="#shp"/></svg></button></div>
        <button class="pill" aria-label="展開">▸</button>
      </div>
      <div class="canvas">
        <svg class="scene" viewBox="109 83 957 547" preserveAspectRatio="xMidYMid meet" role="img" aria-label="天空率モデル">
          <path d="M271 480L262 494.500 562 561 571 546M613 421.500L639 428 613 473" fill="none" stroke="#a8a8a8"/>
          <path d="M314.700 101.700L613 166.500 571 387 271 321z" fill="#aaa8e4" stroke="#3a30cc"/>
          <path d="M566 133V156L555 153V148z" fill="#007070" stroke="#00a0a0"/>
          <path d="M566 133L514 217V362L556 152z" fill="#007070"/>
          <path d="M321 325L511 367V374L321 329z" fill="#4ce0dc" stroke="#18c8c8"/>
          <path d="M323 175L514 213V362L323 315z" fill="#70e4e2" stroke="#2ccccc"/>
          <path d="M375 89L566 132.500 514 217 511 223 320 179z" fill="#70e4e2" stroke="#2ccccc"/>
          <path d="M363 108L555 150M326 169L514 212M323 174L513 216M321 177L511 219" fill="none" stroke="#2ccccc"/>
          <g fill="#70e4e2" stroke="#2ccccc">
            <path id="balcony" d="M320.500 199L323 196 512 238.500V251L510.500 253.500 320.500 211zM320.500 199L510.500 242"/>
            <use href="#balcony" y="25"/><use href="#balcony" y="50"/><use href="#balcony" y="75"/><use href="#balcony" y="101"/>
          </g>
          <path d="M511.500 240V253M511.500 265V279M511.500 290V304M511.500 315V329M511.500 341V355" stroke="#008c8c"/>
          <path d="M514 217V362" stroke="#18b4b4"/>
          <path d="M571 387L613 166.500V472L571 545z" fill="#000064"/>
          <path d="M271 321L571 387V545L271 480z" fill="#7070e2" stroke="#2a20d0"/>
          <path d="M510.500 370V381M510.500 394V406M510.500 420V432M510.500 445V457M510.500 470V482M510.500 496V508" stroke="#18aed0"/>
          <path d="M497 378L511 381M502 404L511 406M497 417L511 419M497 428L511 431M502 443L511 445M502 455L511 457M497 467L511 469M502 494L511 496M502 506L511 508" stroke="#4c98e4" stroke-dasharray="1 5"/>
          <path d="M235 541.500L535 607" stroke="#e0dc38" stroke-width="1.300"/>
          <g class="dims"><text x="231" y="549">1</text><text x="268" y="557">2</text><text x="306" y="565">3</text><text x="344" y="573">4</text><text x="381" y="582">5</text><text x="419" y="590">6</text><text x="457" y="598">7</text><text x="494" y="606">8</text><text x="531" y="615">9</text></g>
        </svg>
        <section class="dialog" role="dialog" aria-label="天空率簡易設定">
          <h1 class="dtitle"><span>天空率簡易設定</span><button aria-label="ヘルプ">?</button><button aria-label="閉じる">✕</button></h1>
          <div class="dbody">
            <div class="drow"><button class="btn">初期化</button><button class="btn">条件設定</button><button class="btn">北側斜線</button></div>
            <div class="drow tight">
              <div class="dsel short"><select aria-label="種別"><option>道路</option></select></div>
              <div class="dsel open"><select aria-label="方式"><option>JCBA方式</option></select>
                <ul class="menu"><li></li><li>東京方式</li><li>JCBA方式</li></ul></div>
              <button class="btn push">更新</button><button class="btn">方式編集</button></div>
            <div class="drow tight"><div class="dsel wide"><select aria-label="境界線"><option>境界線:1</option></select></div><button class="btn" disabled>領域編集</button><button class="btn">CAD更新</button></div>
            <div class="tablebox">
              <div class="tclip">
              <table class="dtable"><thead><tr><th>項目1</th><th></th><th>値</th><th></th></tr></thead>
              <tbody>
              <tr><td>境界線</td><td>No</td><td>1</td></tr><tr><td>領域</td><td>No</td><td></td></tr>
              <tr><td>基本処理</td><td>入隅始点</td><td>延長</td></tr><tr><td></td><td>入隅終点</td><td>延長</td></tr><tr><td></td><td>基本</td><td>基本</td></tr>
              <tr><td>適合始点処理</td><td></td><td>延長</td></tr><tr><td></td><td>距離</td><td>0.000m</td></tr><tr><td></td><td>カット法</td><td>カットしない</td></tr>
              <tr><td>適合終点処理</td><td></td><td>延長</td></tr><tr><td></td><td>距離</td><td>0.000m</td></tr><tr><td></td><td>カット法</td><td>カットしない</td></tr>
              <tr><td>測定点始点</td><td>処理</td><td>適合</td></tr><tr><td></td><td>距離</td><td>0.000m</td></tr><tr><td>測定点終点</td><td>処理</td><td>適合</td></tr>
              </tbody></table>
              </div>
              <div class="vscroll"><i class="up"></i><b class="thumb"></b><i class="down"></i></div>
            </div>
            <div class="message"></div>
            <div class="drow end"><button class="btn ok">OK</button><button class="btn">キャンセル</button></div>
          </div>
        </section>
      </div>
    </main>

    <aside class="right">
      <section class="attrs">
        <h2 class="ph"><span>属性</span><i>≡</i><i>?</i><i>✕</i></h2>
        <div class="attrscroll">
        <h3>面の属性</h3>
        <div class="combo color"><i class="chip"></i><select aria-label="面カラー"><option>カラー</option></select></div>
        <div class="swatch"></div>
        <div class="opacity"><b>100%</b><button aria-label="不透明度">⋮</button></div>
        <h3>線の属性</h3>
        <div class="combo color"><i class="chip"></i><select aria-label="線カラー"><option>カラー</option></select></div>
        <div class="swatch black"></div>
        <div class="opacity"><b>100%</b><button aria-label="不透明度">⋮</button></div>
        </div>
        <button class="expand" aria-label="開く"><i class="tri"></i></button>
      </section>
      <section class="info">
        <h2 class="ph"><span>オブジェクト情報 - 形状</span><i>≡</i><i>?</i><i>✕</i></h2>
        <p class="kind">形状</p>
        <p class="none">選択図形なし</p>
        <div class="empty">表示可能な項目はありません</div>
        <label class="name">名前:<input disabled></label>
      </section>
      <section class="navi">
        <h2 class="ph"><span>ナビゲーション - クラス</span><i>≡</i><i>?</i><i>✕</i></h2>
        <div class="navtabs"><svg class="ic"><use href="#class"/></svg><svg class="ic"><use href="#layer"/></svg><svg class="ic"><use href="#n3"/></svg><svg class="ic"><use href="#n4"/></svg><svg class="ic"><use href="#vsave"/></svg><svg class="ic"><use href="#n6"/></svg></div>
        <div class="field"><label for="oc">他のクラスを:</label><div class="combo dot"><select id="oc"><option>表示+スナップ+編集</option></select></div></div>
        <div class="field"><label for="fl">フィルタ:</label><div class="combo dot"><select id="fl"><option>&lt;すべてのクラス&gt;</option></select></div></div>
        <label class="search"><input placeholder="検索" aria-label="検索"><svg class="ic"><use href="#bsearch"/></svg></label>
        <div class="tree">
          <div class="treeclip">
          <table><thead><tr><th colspan="3">表示...</th><th></th><th>クラス</th></tr></thead>
          <tbody>
          <tr><td></td><td></td><td></td><td colspan="2" class="l0">▽ ADS</td></tr>
          <tr><td><svg><use href="#eye"/></svg></td><td></td><td></td><td colspan="2" class="l1">▽ 天空率</td></tr>
          <tr><td><svg><use href="#eye"/></svg></td><td></td><td></td><td colspan="2" class="l3">リスト</td></tr>
          <tr><td><svg><use href="#eye"/></svg></td><td></td><td></td><td colspan="2" class="l2">▽ リスト</td></tr>
          <tr><td><svg><use href="#eye"/></svg></td><td></td><td></td><td colspan="2" class="l4">グリッド</td></tr>
          <tr><td><svg><use href="#eye"/></svg></td><td></td><td></td><td colspan="2" class="l4">位置確認</td></tr>
          <tr><td><svg><use href="#eye"/></svg></td><td></td><td></td><td colspan="2" class="l4">計画</td></tr>
          <tr><td><svg><use href="#eye"/></svg></td><td></td><td></td><td colspan="2" class="l4">適合</td></tr>
          <tr><td><svg><use href="#eye"/></svg></td><td></td><td></td><td colspan="2" class="l4">天空図</td></tr>
          <tr><td><svg><use href="#eye"/></svg></td><td></td><td></td><td colspan="2" class="l2">▽ 位置確認</td></tr>
          <tr><td><svg><use href="#eye"/></svg></td><td></td><td></td><td colspan="2" class="l4">計画</td></tr>
          <tr><td><svg><use href="#eye"/></svg></td><td></td><td></td><td colspan="2" class="l4">適合</td></tr>
          <tr><td><svg><use href="#eye"/></svg></td><td></td><td></td><td colspan="2" class="l3">計画</td></tr>
          <tr><td><svg><use href="#eye"/></svg></td><td></td><td></td><td colspan="2" class="l3">測定点</td></tr>
          <tr><td><svg><use href="#eye"/></svg></td><td></td><td></td><td colspan="2" class="l3">適合</td></tr>
          <tr><td><svg><use href="#eye"/></svg></td><td></td><td></td><td colspan="2" class="l3">放射</td></tr>
          <tr><td></td><td></td><td></td><td colspan="2" class="l1">▽ 与条件</td></tr>
          <tr><td></td><td><svg><use href="#eye"/></svg></td><td></td><td colspan="2" class="l3">みなし敷地</td></tr>
          </tbody></table>
          </div>
          <div class="vscroll"><i class="up"></i><b class="thumb mid"></b><i class="down"></i></div>
        </div>
        <div class="hscroll"><i class="lt"></i><b></b><i class="rt"></i></div>
      </section>
    </aside>
  </div>

  <footer class="status"><span>ヘルプを表示するには、F1キーまたは「?」アイコンをクリックしてください。</span>
    <div class="snaps"><button class="on" aria-label="グリッド"><svg><use href="#s1"/></svg></button><button class="on" aria-label="図形"><svg><use href="#s2"/></svg></button><button class="on" aria-label="角度"><svg><use href="#s3"/></svg></button><button class="on" aria-label="交点"><svg><use href="#s4"/></svg></button><button class="on" aria-label="点"><svg><use href="#s5"/></svg></button><button aria-label="定点"><svg><use href="#s6"/></svg></button><button aria-label="辺"><svg><use href="#s7"/></svg></button><button class="down" aria-label="接線"><svg><use href="#s8"/></svg></button><button aria-label="面"><svg><use href="#s9"/></svg></button><button class="apart" aria-label="一時停止"><svg><use href="#pause"/></svg></button><button aria-label="設定"><svg><use href="#cog"/></svg></button></div>
  </footer>
  <footer class="taskbar">
    <button class="start" aria-label="スタート"><svg><use href="#win"/></svg></button>
    <label class="wsearch"><svg><use href="#wsearch"/></svg><input aria-label="検索" placeholder="ここに入力して検索"></label>
    <div class="apps"><button aria-label="Cortana"><svg><use href="#cort"/></svg></button><button aria-label="タスクビュー"><svg><use href="#tview"/></svg></button><button class="run" aria-label="エクスプローラー"><svg><use href="#folder"/></svg></button><button class="run" aria-label="メモ帳"><svg><use href="#npad"/></svg></button><button class="badge ps"><span>Ps</span></button><button aria-label="Edge"><svg><use href="#edge"/></svg></button><button aria-label="リモート"><svg><use href="#rpc"/></svg></button><button class="run" aria-label="Chrome"><svg><use href="#chrome"/></svg></button><button class="run" aria-label="ペイント"><svg><use href="#paint"/></svg></button><button aria-label="プレビュー"><svg><use href="#preview"/></svg></button><button class="run" aria-label="Teams"><svg><use href="#teams"/></svg></button><button aria-label="ブラウザ"><svg><use href="#swirl"/></svg></button><button aria-label="CAD"><svg><use href="#bluea"/></svg></button><button aria-label="Firefox"><svg><use href="#ffox"/></svg></button><button class="run badge ai"><span>Ai</span></button><button class="run active" aria-label="Vectorworks"><svg><use href="#vlogo"/></svg></button><button class="run" aria-label="Excel"><svg><use href="#excel"/></svg></button></div>
    <div class="tray"><i class="caret"></i><span class="ime">あ</span><time>16:43<br>2021/11/29</time><span class="alert"><svg><use href="#notif"/></svg><b>6</b></span></div>
  </footer>
</div>
</body>
</html>
```
FILE: styles.css
```css
*{box-sizing:border-box}
html,body{height:100%;margin:0}
body{font:7px/10px "Noto Sans","Noto Sans CJK JP",sans-serif;font-feature-settings:"palt";color:#000;background:#f0f0f0}
button,input,select{font:inherit;font-feature-settings:inherit;color:inherit;margin:0;padding:0;border:0;background:none;border-radius:0;min-width:0}
select{appearance:none;outline:0}
h1,h2,h3,p,ul{margin:0;padding:0;font-size:inherit;font-weight:normal;list-style:none}
i{font-style:normal}
svg{display:block;flex:none}
.sprite{position:absolute;width:0;height:0}
.ic{width:12px;height:12px}
.app{display:flex;flex-direction:column;height:100vh;overflow:hidden}
.sep{width:1px;height:12px;background:#b4b4b4;flex:none}
.tri{width:0;height:0;border:3px solid transparent;border-top:4px solid #111;border-bottom:0}

/* window frame */
.titlebar{height:14px;display:flex;align-items:center;gap:2px;padding-left:1px;background:#fff}
.titlebar .ic{width:11px;height:11px}
.wincontrols{margin-left:auto;display:flex}
.wincontrols button{width:29px;height:14px;font:8px/14px "DejaVu Sans",sans-serif}
.menubar{height:18px;display:flex;align-items:center;gap:9px;padding:0 4px 0 1px}
.menubar .ic{width:11px;height:11px}
.menubar>.ic{margin-right:-5px}
.account{margin-left:auto;display:flex;align-items:center;gap:7px}
.account .mdi{display:flex;gap:4px;margin-left:18px;padding-top:4px;font:8px/10px "DejaVu Sans",sans-serif}
.alert{position:relative}
.alert b{position:absolute;right:-4px;top:-1px;width:8px;height:8px;border-radius:4px;background:#e81b23;color:#fff;font-size:6px;line-height:8px;text-align:center}
.main{flex:1;min-height:0;display:flex;gap:3px}

/* palettes */
.ph{display:flex;align-items:center;height:12px;flex:none;padding:0 3px 0 1px;border:1px solid #b8b8b8;background:#f3f3f3;gap:6px}
.ph span{flex:1;white-space:nowrap;overflow:hidden}
.ph i{font:bold 8px/10px "DejaVu Sans",sans-serif}
.left{width:104px;flex:none;display:flex;flex-direction:column;gap:3px;padding-top:1px}
.pane{background:#fff;display:flex;flex-direction:column}
.toolset{height:301px;background:#f0f0f0}
.listwrap{flex:1;display:flex;min-height:0;background:#fff}
.tools{flex:1;display:flex;flex-direction:column}
.tools li{flex:1;display:flex;align-items:center;gap:5px;padding-left:1px}
.ti{width:16px;height:14px}
.sub{margin-left:auto;padding-right:3px;font-size:5px}
.vscroll{width:10px;flex:none;display:flex;flex-direction:column;align-items:center;background:#f0f0f0}
.vscroll i,.hscroll i{width:4px;height:4px;border:solid #444;border-width:1px 0 0 1px;margin:5px 0 1px;transform:rotate(45deg);flex:none}
.vscroll .down{margin:auto 0 5px;transform:rotate(225deg)}
.thumb{width:9px;height:60px;background:#cdcdcd}
.thumb.long{height:194px}
.thumb.mid{height:98px}
.tabs5{display:grid;grid-template-columns:repeat(5,1fr);background:#a8d0f0}
.tabs5 button{height:14px;display:grid;place-items:center;background:#ececec;border:1px solid #b0b4b8}
.tabs5 .on{background:#66aede}
.tabs5 svg{width:16px;height:12px}
.adsbt{height:147px}
.basic{flex:1}
.grid5{display:grid;grid-template-columns:repeat(5,1fr);grid-auto-rows:14px;padding-top:1px;justify-items:center;align-items:center}
.grid5 svg{width:16px;height:13px}
.grid5 .sel{width:20px;height:14px;background:#cfe6f8;border:1px solid #2a91d8}
.more{display:flex;align-items:end}
.more::after{content:"";width:3px;height:3px;margin-right:-3px;background:linear-gradient(135deg,transparent 50%,#111 50%)}

/* document */
.center{flex:1;min-width:0;display:flex;flex-direction:column;border:1px solid #b0b0b0;border-width:1px 2px 2px;margin-bottom:2px}
.doctabs{height:14px;display:flex;align-items:center;background:#f8f8f8;padding-right:3px;border-bottom:1px solid #999}
.tab{width:124px;height:13px;display:flex;align-items:center;justify-content:flex-end;gap:6px;padding-right:2px;background:linear-gradient(135deg,#ececec 8px,#999 8px,#fff 9px);font-weight:bold;border-right:1px solid #999;white-space:nowrap}
.tab button{font:7px "DejaVu Sans",sans-serif}
.newtab{width:15px;height:13px;border-right:1px solid #999;background:#f0f0f0}
.doctabs .tri{margin-left:auto}
.toolbar{height:17px;display:flex;align-items:center;gap:3px;padding:0 3px 0 2px;border-bottom:1px solid #c4c4c4}
.grp{display:flex;align-items:center;gap:1px}
.grp.sp{gap:2px}
.sp{margin-left:3px}
.combo{display:flex;align-items:center;width:96px;height:12px;flex:none;background:#fff;border:1px solid #a4a4a4;padding-right:4px}
.combo select{flex:1;height:10px;padding-left:2px;line-height:10px}
.combo::after,.dd::after{content:"";border:3px solid transparent;border-top:3px solid #111;border-bottom:0;flex:none;pointer-events:none}
.combo.dot::after,.dd.dot::after{border-width:2px;border-bottom:0}
.narrow{width:52px}
.dd{display:flex;align-items:center;justify-content:space-between;width:27px;height:12px;border:1px solid #a8a8a8;padding:0 3px 0 1px;background:#f4f4f4;flex:none}
.hot{background:#b9dcf4;outline:1px solid #3b97d8}
.ang{width:33px;height:12px;border:1px solid #9c9c9c;background:#fff;padding-left:2px}
.pill{width:15px;height:7px;border-radius:2px;background:#8d8d8d;color:#fff;font-size:6px;line-height:6px;margin-left:auto;flex:none}
.modebar{height:19px;display:flex;align-items:center;gap:4px;padding:0 3px 0 2px}
.modebar svg{width:18px;height:15px}
.modebar .dd{width:27px;height:15px}
.modebar .dd svg{width:14px;height:13px}
.modebar p{white-space:nowrap}
.moderight{margin-left:auto;display:flex;align-items:center;gap:4px}
.modebar .pill{margin-left:11px}
.canvas{flex:1;min-height:0;position:relative;background:#fff}
.scene{width:100%;height:100%}
.dims text{font:italic bold 8px "DejaVu Sans",sans-serif;text-anchor:middle}

/* settings dialog, floating over the drawing */
.dialog{position:absolute;left:619px;top:34px;width:250px;height:292px;display:flex;flex-direction:column;background:#f0f0f0;border:1px solid #8a8a8a;box-shadow:1px 2px 5px rgba(0,0,0,.3);font-family:"Liberation Sans","Noto Sans CJK JP",sans-serif;font-size:8px}
.dtitle{display:flex;align-items:center;height:18px;flex:none;background:#fff;padding:0 9px 0 5px;gap:20px}
.dtitle span{flex:1}
.dtitle button{font-family:"DejaVu Sans",sans-serif;font-size:9px}
.dbody{flex:1;display:flex;flex-direction:column;gap:3px;padding:16px 9px 7px 8px}
.drow{display:flex;gap:12px;flex:none}
.drow.tight{gap:5px}
.drow.end{justify-content:flex-end;margin-top:5px}
.drow.tight .btn+.btn{margin-left:7px}
.btn{width:54px;height:13px;flex:none;border:1px solid #adadad;background:#e1e1e1;line-height:11px}
.btn.push{margin-left:auto}
.btn:disabled{background:#ccc;color:#888;border-color:#bfbfbf}
.btn.ok{border:2px solid #0078d7;line-height:9px}
.dsel{display:flex;align-items:center;height:13px;width:53px;background:#fff;border:1px solid #8a8a8a;padding-right:4px}
.dsel select{flex:1;padding-left:1px;height:11px}
.dsel::after{content:"";width:4px;height:4px;border:solid #444;border-width:0 1px 1px 0;transform:rotate(45deg);flex:none;pointer-events:none}
.short{width:43px}
.wide{width:73px}
.open{position:relative;border-color:#0078d7;background:linear-gradient(90deg,#fff 41px,#cce4f7 41px)}
.menu{position:absolute;left:-1px;top:12px;width:53px;height:38px;background:#fff;border:1px solid #0078d7;z-index:2}
.menu li{height:12px;line-height:12px;padding-left:1px}
.tablebox{display:flex;height:147px;flex:none;width:218px;margin-top:3px;background:#fff;border:1px solid #888;border-width:1px 0 0 1px}
.tclip{flex:1;overflow:hidden}
.dtable{width:100%;border-collapse:collapse;table-layout:fixed}
.dtable th,.dtable td{padding:0 0 0 3px;text-align:left;font-weight:normal;height:10px;line-height:10px;white-space:nowrap}
.dtable th{height:12px;border-right:1px solid #999;border-bottom:1px solid #999}
.dtable th:nth-child(-n+3){width:63px}
.message{height:16px;flex:none;margin-top:10px;border:1px solid #b4b4b4}

/* right side */
.right{width:127px;flex:none;display:flex;flex-direction:column;gap:4px;padding:1px 0 3px;margin-left:2px}
.attrs{height:151px;display:flex;flex-direction:column}
.attrscroll{flex:1;overflow:hidden;display:flex;flex-direction:column;gap:2px;padding-top:1px}
.attrscroll>*{flex:none}
h3{display:flex;align-items:center;gap:3px;height:12px}
h3::after{content:"";flex:1;height:1px;background:#bbb;margin-right:3px}
.color{width:100%;height:16px;background:#f2f2f2;padding-left:4px}
.color select{text-align:center;text-align-last:center}
.chip{width:9px;height:9px;background:#222}
.swatch{height:16px;background:#fff;border:1px solid #999}
.black{background:#000}
.opacity{height:16px;display:flex;align-items:center;justify-content:flex-end;border:1px solid #999;background:linear-gradient(90deg,transparent 4px,#000 15px 112px,#f0f0f0 112px),repeating-conic-gradient(#bbb 0 25%,#fff 0 50%) 0 0/6px 6px;color:#fff}
.opacity b{font-size:9px}
.opacity button{width:13px;margin-left:4px;color:#111;font-weight:bold;font-size:8px}
.expand{height:8px;display:grid;place-items:center;border:1px solid #b8b8b8;background:#e4e4e4}
.info{height:146px;display:flex;flex-direction:column}
.kind{padding:5px 4px;height:20px}
.none{height:13px;border:1px solid #888;background:#f8f8f8;font-weight:bold;font-size:8px;padding-left:1px;line-height:11px}
.empty{flex:1;margin:2px 0;display:grid;place-items:center;border:1px solid #aaa;padding-bottom:20px}
.name{display:flex;align-items:center;gap:4px;padding-left:2px;height:12px;color:#777}
.name input{flex:1;height:10px;border:1px solid #888;background:#f0f0f0}
.navi{flex:1;min-height:0;display:flex;flex-direction:column}
.navtabs{display:flex;align-items:center;height:17px;gap:2px;padding-left:2px}
.navtabs .ic{width:13px;padding-right:1px;border-right:1px solid #999}
.field{display:flex;align-items:center;height:20px;margin-top:3px}
.field+.field{margin-top:0}
.field label{width:42px;padding-left:4px;white-space:nowrap}
.field .combo{width:80px;height:13px;margin-left:auto;margin-right:2px}
.search{display:flex;align-items:center;height:14px;margin:2px 2px 0;background:#fff;border:1px solid #aaa}
.search input{flex:1;padding-left:2px}
.tree{flex:1;min-height:0;display:flex;margin:6px 2px 0 2px;background:#fff;border:1px solid #999;border-bottom:0}
.treeclip{flex:1;min-width:0;overflow:hidden}
.tree table{border-collapse:collapse;table-layout:fixed;width:140px}
.tree td,.tree th{padding:0;height:10px;line-height:10px;font-weight:normal;text-align:left;white-space:nowrap;border-right:1px solid #999}
.tree th{height:11px;background:#f0f0f0;border-bottom:1px solid #999;padding-left:3px}
.tree th:nth-child(1){width:32px}
.tree th:nth-child(2){width:15px}
.tree svg{width:10px;height:8px;margin:auto}
.tree .l0{padding-left:21px}
.tree .l1{padding-left:32px}
.tree .l2{padding-left:42px}
.tree .l3{padding-left:50px}
.tree .l4{padding-left:60px}
.hscroll{height:10px;display:flex;align-items:center;margin:0 13px 0 3px;background:#f0f0f0}
.hscroll b{width:42px;height:9px;background:#cdcdcd;margin:0 3px}
.hscroll i{margin:0 2px;transform:rotate(-45deg)}
.hscroll .rt{margin-left:auto;transform:rotate(135deg)}

/* status and task bars */
.status{height:16px;flex:none;display:flex;align-items:center;justify-content:space-between;padding-left:2px}
.snaps{display:flex}
.snaps button{width:16px;height:15px;display:grid;place-items:center;border:1px solid #b4b4b4}
.snaps .apart{margin-left:4px}
.snaps .on{background:#cde6f7}
.snaps .down{background:#999}
.snaps svg{width:12px;height:12px}
.taskbar{height:25px;flex:none;display:flex;background:linear-gradient(90deg,#0e2b33,#14303c 40%,#1b2b47 80%,#1c2743)}
.taskbar svg{width:15px;height:15px}
.start{width:30px;display:grid;place-items:center}
.taskbar .start svg{width:12px;height:12px}
.wsearch{width:215px;display:flex;align-items:center;gap:6px;padding-left:7px;background:#f2f2f2}
.taskbar .wsearch svg{width:12px;height:12px}
.wsearch input{flex:1;font-size:9px}
.wsearch input::placeholder{color:#333}
.apps{display:flex;flex:none;width:520px}
.apps button{flex:1;display:grid;place-items:center;border-bottom:2px solid transparent}
.apps .run{border-image:linear-gradient(90deg,transparent 3px,#76b9ed 3px 27px,transparent 27px) 2}
.apps .active{background:#4a5868}
.badge span{width:14px;height:14px;border:1px solid #4aa6f0;border-radius:2px;background:#061a3a;color:#8fc8ff;font-weight:bold;line-height:12px;font-size:8px}
.ai span{border-color:#f28c1c;background:#2c1500;color:#ff9d2e}
.tray{margin-left:auto;display:flex;align-items:center;gap:7px;color:#fff;padding-right:12px}
.caret{width:5px;height:5px;border:solid #fff;border-width:1px 0 0 1px;transform:rotate(45deg)}
.ime{font-size:10px}
.tray time{text-align:center;line-height:11px}
.tray .alert{margin-left:4px}
.tray .alert b{top:8px;background:#3a4660;border:1px solid #fff;line-height:6px}
```
